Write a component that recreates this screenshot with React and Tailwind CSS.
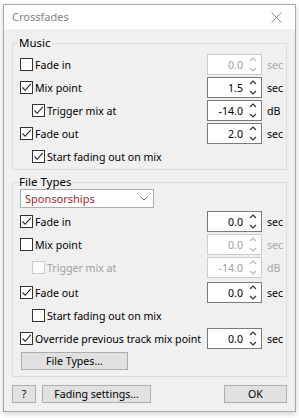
import React from 'react';

function CheckBox({ checked, disabled }) {
  return (
    <span
      className={`w-[13px] h-[13px] shrink-0 border flex items-center justify-center ${disabled ? 'border-[#cccccc] bg-[#fcfcfc]' : 'border-[#333333] bg-white'}`}
    >
      {checked && (
        <svg width="11" height="11" viewBox="0 0 11 11">
          <polyline points="1.5,5.5 4.2,8.3 9.8,1.8" fill="none" stroke="#222" strokeWidth="1.1" />
        </svg>
      )}
    </span>
  );
}

function SpinBox({ value, disabled }) {
  const stroke = disabled ? '#b8b8b8' : '#333';
  return (
    <div
      className={`w-[55px] h-[21px] shrink-0 border bg-white flex items-center ${disabled ? 'border-[#cccccc] text-[#a0a0a0]' : 'border-[#7a7a7a] text-black'}`}
    >
      <span className="flex-1 text-right pr-[5px]">{value}</span>
      <span className="w-[13px] flex flex-col items-center gap-[5px] pr-[3px]">
        <svg width="8" height="5" viewBox="0 0 8 5">
          <polyline points="1,4 4,1 7,4" fill="none" stroke={stroke} strokeWidth="1.2" />
        </svg>
        <svg width="8" height="5" viewBox="0 0 8 5">
          <polyline points="1,1 4,4 7,1" fill="none" stroke={stroke} strokeWidth="1.2" />
        </svg>
      </span>
    </div>
  );
}

function Row({ label, checked, disabled, indent, value, unit, boxOff, extra }) {
  return (
    <div className={`flex items-center h-[23px] ${extra || ''}`}>
      <label className={`flex items-center flex-1 min-w-0 gap-[2px] ${indent ? 'pl-[19px]' : 'pl-[7px]'} ${disabled ? 'text-[#a0a0a0]' : 'text-black'}`}>
        <CheckBox checked={checked} disabled={disabled} />
        <span className="whitespace-nowrap">{label}</span>
      </label>
      {value !== undefined && (
        <>
          <SpinBox value={value} disabled={boxOff} />
          <span className={`w-[24px] shrink-0 pl-[5px] ${boxOff ? 'text-[#a8a8a8]' : 'text-black'}`}>{unit}</span>
        </>
      )}
    </div>
  );
}

function Button({ children, className }) {
  return (
    <button className={`h-[18px] bg-[#e1e1e1] border border-[#adadad] flex items-center justify-center text-black ${className}`}>
      {children}
    </button>
  );
}

export default function App() {
  return (
    <div className="min-h-screen bg-white pt-[4px] pl-[3px] font-['Noto_Sans',sans-serif] text-[10.6px] leading-[14px]">
      <div className="w-[293px] border border-[#a8a8a8] shadow-[0_2px_6px_rgba(0,0,0,0.18)] bg-[#f0f0f0]">
        <div className="h-[24px] bg-white flex items-center justify-between pl-[8px] pr-[13px] text-[#858585] text-[11px]">
          <span>Crossfades</span>
          <svg width="11" height="11" viewBox="0 0 11 11">
            <path d="M0.5 0.5 L10.5 10.5 M10.5 0.5 L0.5 10.5" stroke="#8a8a8a" strokeWidth="1" />
          </svg>
        </div>

        <div className="px-[8px] pt-[7px] pb-[8px]">
          <fieldset className="border border-[#dcdcdc] m-0 p-0 pt-[3px] pb-[1px]">
            <legend className="ml-[5px] px-[1px] leading-[14px] text-[11.5px] text-black">Music</legend>
            <Row label="Fade in" value="0.0" unit="sec" boxOff />
            <Row label="Mix point" checked value="1.5" unit="sec" />
            <Row label="Trigger mix at" checked indent value="-14.0" unit="dB" />
            <Row label="Fade out" checked value="2.0" unit="sec" />
            <Row label="Start fading out on mix" checked indent />
          </fieldset>

          <fieldset className="border border-[#dcdcdc] m-0 mt-[5px] p-0 pb-[6px]">
            <legend className="ml-[5px] px-[1px] leading-[14px] text-[11.5px] text-black">File Types</legend>
            <div className="pl-[7px]">
              <div className="w-[134px] h-[19px] bg-white border border-[#adadad] flex items-center justify-between pl-[4px] pr-[5px] text-[#a0262e] text-[11px]">
                <span>Sponsorships</span>
                <svg width="8" height="5" viewBox="0 0 8 5">
                  <polyline points="0.5,0.5 4,4 7.5,0.5" fill="none" stroke="#666" strokeWidth="1" />
                </svg>
              </div>
            </div>
            <div className="pt-[2px]">
              <Row label="Fade in" checked value="0.0" unit="sec" />
              <Row label="Mix point" value="0.0" unit="sec" boxOff />
              <Row label="Trigger mix at" indent disabled value="-14.0" unit="dB" boxOff />
              <Row label="Fade out" checked value="0.0" unit="sec" extra="mt-[2px]" />
              <Row label="Start fading out on mix" indent />
              <Row label="Override previous track mix point" checked value="0.0" unit="sec" />
            </div>
            <div className="pl-[8px] pt-[2px]">
              <Button className="w-[107px] h-[17px]">File Types...</Button>
            </div>
          </fieldset>

          <div className="flex items-center mt-[8px]">
            <Button className="w-[24px]">?</Button>
            <Button className="w-[109px] ml-[6px]">Fading settings...</Button>
            <Button className="w-[63px] ml-auto border-[#0078d7] bg-[#e1e1e1]">OK</Button>
          </div>
        </div>
      </div>
    </div>
  );
}
